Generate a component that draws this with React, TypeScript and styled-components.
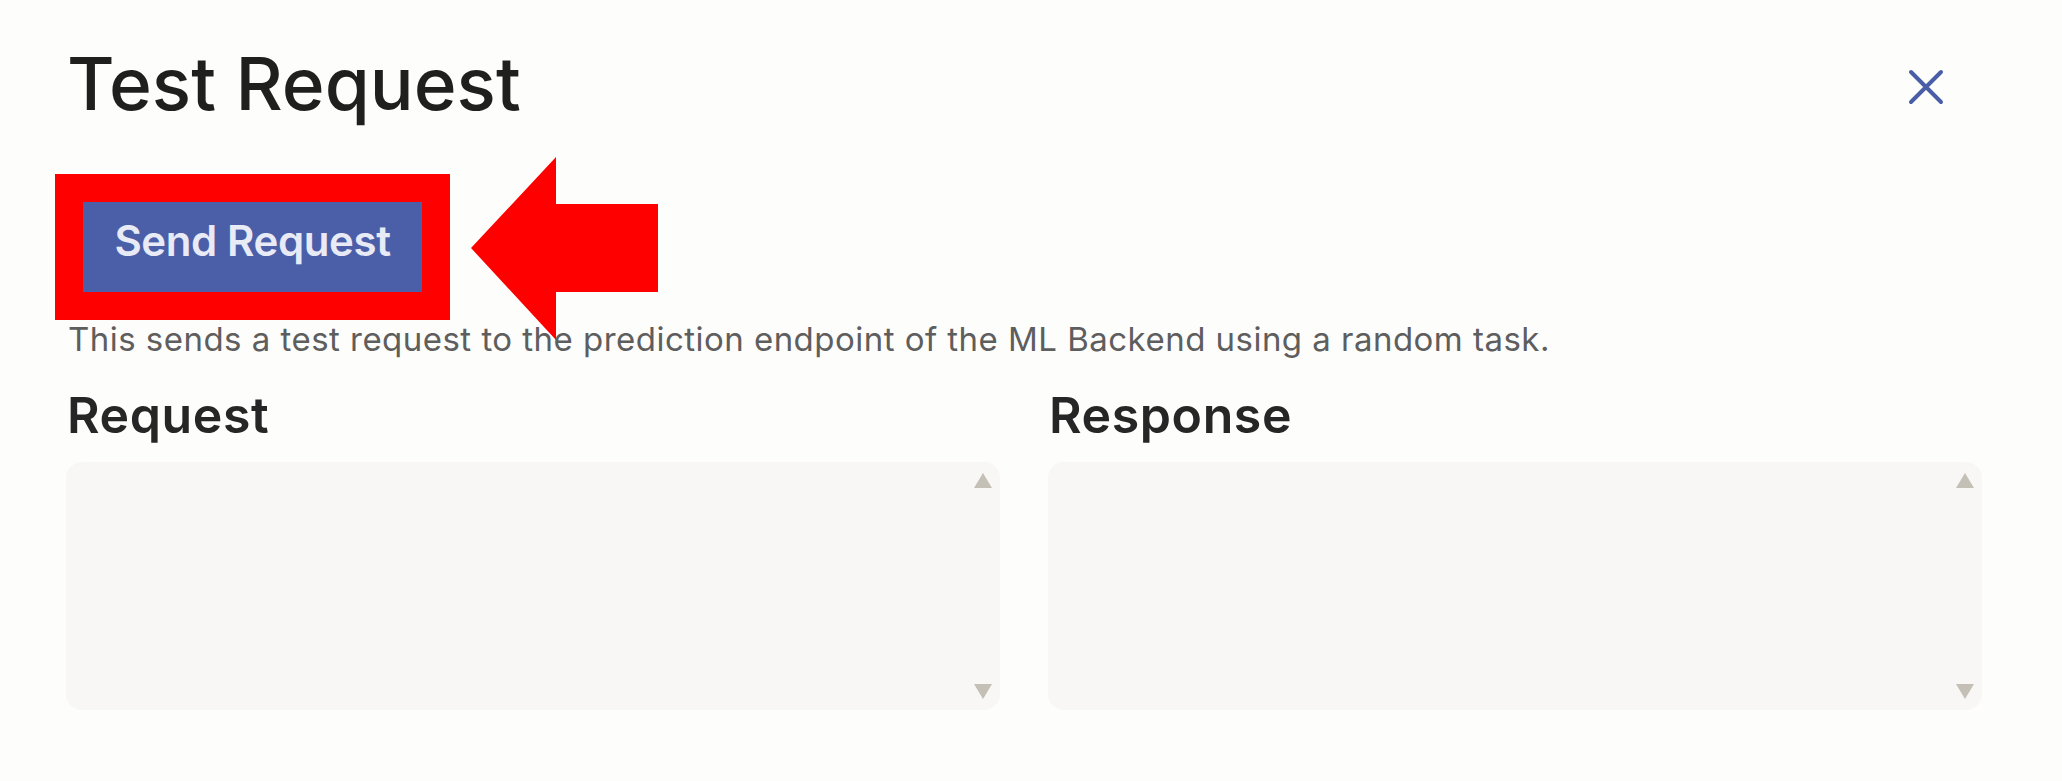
import { FC } from 'react';
import styled, { createGlobalStyle } from 'styled-components';

const GlobalStyle = createGlobalStyle`
  html, body {
    margin: 0;
    padding: 0;
    background: #fdfdfc;
    font-family: Inter, 'Noto Sans', sans-serif;
  }
`;

const Page = styled.div`
  min-height: 781px;
  box-sizing: border-box;
  padding: 47px 80px 0 66px;
  display: flex;
  flex-direction: column;
`;

const Header = styled.div`
  display: flex;
  align-items: center;
  justify-content: space-between;
  height: 73px;
`;

const Title = styled.h1`
  margin: 0 0 0 1px;
  font-size: 73px;
  line-height: 73px;
  font-weight: 500;
  color: #1f1f1e;
  letter-spacing: 0;
`;

const CloseButton = styled.button`
  border: none;
  background: none;
  padding: 0;
  margin: 6px 38px 0 0;
  width: 36px;
  height: 36px;
  cursor: pointer;
  display: flex;
`;

const ActionRow = styled.div`
  position: relative;
  display: flex;
  margin-top: 82px;
  height: 90px;
`;

// red outline marks the button, the arrow points at it
const SendButton = styled.button`
  margin-left: 17px;
  width: 339px;
  height: 90px;
  padding: 0 0 14px;
  border: none;
  background: #4b5ea8;
  color: #e8eaf6;
  font-family: Inter, 'Noto Sans', sans-serif;
  font-size: 42px;
  font-weight: 600;
  letter-spacing: -0.4px;
  outline: 28px solid #ff0000;
  cursor: pointer;
`;

const Pointer = styled.svg`
  position: absolute;
  left: 405px;
  top: -45px;
  width: 187px;
  height: 183px;
  z-index: 2;
`;

const Hint = styled.p`
  margin: 31px 0 0 2px;
  font-size: 33px;
  line-height: 33px;
  color: #5e5e5e;
  letter-spacing: 0.47px;
`;

const Panels = styled.div`
  display: grid;
  grid-template-columns: 1fr 1fr;
  column-gap: 48px;
  margin-top: 34px;
`;

const Panel = styled.div`
  display: flex;
  flex-direction: column;
`;

const PanelTitle = styled.h2`
  margin: 0 0 22px 1px;
  font-size: 50px;
  line-height: 50px;
  font-weight: 600;
  color: #262626;
  letter-spacing: 0.6px;
`;

const Field = styled.div`
  position: relative;
  height: 248px;
`;

const Area = styled.textarea`
  width: 100%;
  height: 100%;
  box-sizing: border-box;
  border: none;
  border-radius: 16px;
  background: #f8f7f5;
  resize: none;
  outline: none;
  overflow: hidden;
`;

const ScrollArrow = styled.span<{ $down?: boolean }>`
  position: absolute;
  right: 8px;
  ${p => (p.$down ? 'bottom: 11px;' : 'top: 11px;')}
  width: 0;
  height: 0;
  border-left: 9px solid transparent;
  border-right: 9px solid transparent;
  ${p =>
    p.$down
      ? 'border-top: 15px solid #c4c0b6;'
      : 'border-bottom: 15px solid #c4c0b6;'}
  pointer-events: none;
`;

const TextPanel: FC<{ title: string }> = ({ title }) => (
  <Panel>
    <PanelTitle>{title}</PanelTitle>
    <Field>
      <Area readOnly />
      <ScrollArrow />
      <ScrollArrow $down />
    </Field>
  </Panel>
);

export default function App() {
  return (
    <>
      <GlobalStyle />
      <Page>
        <Header>
          <Title>Test Request</Title>
          <CloseButton aria-label="Close">
            <svg width="36" height="36" viewBox="0 0 36 36">
              <path
                d="M3 3 L33 33 M33 3 L3 33"
                stroke="#4a5ea8"
                strokeWidth="4"
                strokeLinecap="round"
              />
            </svg>
          </CloseButton>
        </Header>
        <ActionRow>
          <SendButton>Send Request</SendButton>
          <Pointer viewBox="0 0 187 183">
            <polygon
              points="0,91 85,0 85,47 187,47 187,135 85,135 85,183"
              fill="#ff0000"
            />
          </Pointer>
        </ActionRow>
        <Hint>
          This sends a test request to the prediction endpoint of the ML Backend
          using a random task.
        </Hint>
        <Panels>
          <TextPanel title="Request" />
          <TextPanel title="Response" />
        </Panels>
      </Page>
    </>
  );
}
